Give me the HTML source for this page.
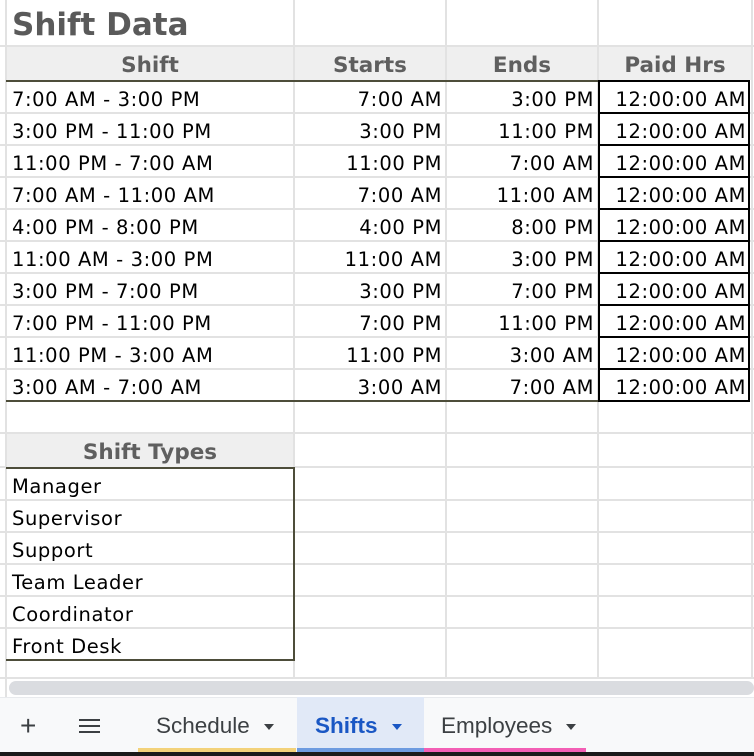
<!DOCTYPE html>
<html><head><meta charset="utf-8"><style>
*{margin:0;padding:0;box-sizing:border-box}
body{width:754px;height:756px;overflow:hidden;background:#fff;position:relative;font-family:"DejaVu Sans","Liberation Sans",sans-serif;color:#000}
.h{position:absolute;height:2px;background:#e2e2e2}
.v{position:absolute;width:2px;background:#e2e2e2}
.t{position:absolute;font-size:19.5px;letter-spacing:0.6px;line-height:32px;white-space:nowrap;margin-top:2px}
.r{text-align:right}
.hd{position:absolute;background:#efefef;color:#5f5f5f;font-weight:bold;font-size:21.5px;text-align:center;line-height:38px;height:33px;overflow:visible}
.pb{position:absolute;left:598px;width:152px;height:34px;border:2px solid #000}
.tab{position:absolute;top:697px;height:55px;font-family:"Liberation Sans",sans-serif;font-size:22.5px;color:#3c4043;line-height:58px}
.tab i{display:inline-block;width:0;height:0;border-left:5px solid transparent;border-right:5px solid transparent;border-top:6px solid currentColor;vertical-align:middle;margin-left:14px}
</style></head><body>
<div style="position:absolute;left:12px;top:3px;font-size:31px;font-weight:bold;color:#5a5a5a;line-height:44px">Shift Data</div>
<div class="v" style="left:5px;top:0;height:697px"></div>
<div class="v" style="left:293px;top:0;height:697px"></div>
<div class="v" style="left:445px;top:0;height:697px"></div>
<div class="v" style="left:597px;top:0;height:697px"></div>
<div class="v" style="left:751px;top:0;height:697px"></div>
<div class="h" style="left:0;width:754px;top:45px"></div>
<div class="h" style="left:0;width:754px;top:112px"></div>
<div class="h" style="left:0;width:754px;top:144px"></div>
<div class="h" style="left:0;width:754px;top:176px"></div>
<div class="h" style="left:0;width:754px;top:208px"></div>
<div class="h" style="left:0;width:754px;top:240px"></div>
<div class="h" style="left:0;width:754px;top:272px"></div>
<div class="h" style="left:0;width:754px;top:304px"></div>
<div class="h" style="left:0;width:754px;top:336px"></div>
<div class="h" style="left:0;width:754px;top:368px"></div>
<div class="h" style="left:0;width:754px;top:432px"></div>
<div class="h" style="left:0;width:754px;top:466px"></div>
<div class="h" style="left:0;width:754px;top:499px"></div>
<div class="h" style="left:0;width:754px;top:531px"></div>
<div class="h" style="left:0;width:754px;top:563px"></div>
<div class="h" style="left:0;width:754px;top:595px"></div>
<div class="h" style="left:0;width:754px;top:627px"></div>
<div class="h" style="left:0;width:754px;top:677px"></div>
<div class="hd" style="left:7px;top:47px;width:286px">Shift</div>
<div class="hd" style="left:295px;top:47px;width:150px">Starts</div>
<div class="hd" style="left:447px;top:47px;width:150px">Ends</div>
<div class="hd" style="left:599px;top:47px;width:152px">Paid Hrs</div>
<div style="position:absolute;left:6px;top:80px;width:592px;height:2px;background:#4d4d3a"></div>
<div style="position:absolute;left:6px;top:400px;width:592px;height:2px;background:#4d4d3a"></div>
<div class="pb" style="top:80px"></div><div class="pb" style="top:112px"></div><div class="pb" style="top:144px"></div><div class="pb" style="top:176px"></div><div class="pb" style="top:208px"></div><div class="pb" style="top:240px"></div><div class="pb" style="top:272px"></div><div class="pb" style="top:304px"></div><div class="pb" style="top:336px"></div><div class="pb" style="top:368px"></div>
<div class="t" style="left:12px;top:82px">7:00 AM - 3:00 PM</div><div class="t r" style="left:296px;width:146px;top:82px">7:00 AM</div><div class="t r" style="left:448px;width:146px;top:82px">3:00 PM</div><div class="t r" style="left:600px;width:146px;top:82px">12:00:00 AM</div>
<div class="t" style="left:12px;top:114px">3:00 PM - 11:00 PM</div><div class="t r" style="left:296px;width:146px;top:114px">3:00 PM</div><div class="t r" style="left:448px;width:146px;top:114px">11:00 PM</div><div class="t r" style="left:600px;width:146px;top:114px">12:00:00 AM</div>
<div class="t" style="left:12px;top:146px">11:00 PM - 7:00 AM</div><div class="t r" style="left:296px;width:146px;top:146px">11:00 PM</div><div class="t r" style="left:448px;width:146px;top:146px">7:00 AM</div><div class="t r" style="left:600px;width:146px;top:146px">12:00:00 AM</div>
<div class="t" style="left:12px;top:178px">7:00 AM - 11:00 AM</div><div class="t r" style="left:296px;width:146px;top:178px">7:00 AM</div><div class="t r" style="left:448px;width:146px;top:178px">11:00 AM</div><div class="t r" style="left:600px;width:146px;top:178px">12:00:00 AM</div>
<div class="t" style="left:12px;top:210px">4:00 PM - 8:00 PM</div><div class="t r" style="left:296px;width:146px;top:210px">4:00 PM</div><div class="t r" style="left:448px;width:146px;top:210px">8:00 PM</div><div class="t r" style="left:600px;width:146px;top:210px">12:00:00 AM</div>
<div class="t" style="left:12px;top:242px">11:00 AM - 3:00 PM</div><div class="t r" style="left:296px;width:146px;top:242px">11:00 AM</div><div class="t r" style="left:448px;width:146px;top:242px">3:00 PM</div><div class="t r" style="left:600px;width:146px;top:242px">12:00:00 AM</div>
<div class="t" style="left:12px;top:274px">3:00 PM - 7:00 PM</div><div class="t r" style="left:296px;width:146px;top:274px">3:00 PM</div><div class="t r" style="left:448px;width:146px;top:274px">7:00 PM</div><div class="t r" style="left:600px;width:146px;top:274px">12:00:00 AM</div>
<div class="t" style="left:12px;top:306px">7:00 PM - 11:00 PM</div><div class="t r" style="left:296px;width:146px;top:306px">7:00 PM</div><div class="t r" style="left:448px;width:146px;top:306px">11:00 PM</div><div class="t r" style="left:600px;width:146px;top:306px">12:00:00 AM</div>
<div class="t" style="left:12px;top:338px">11:00 PM - 3:00 AM</div><div class="t r" style="left:296px;width:146px;top:338px">11:00 PM</div><div class="t r" style="left:448px;width:146px;top:338px">3:00 AM</div><div class="t r" style="left:600px;width:146px;top:338px">12:00:00 AM</div>
<div class="t" style="left:12px;top:370px">3:00 AM - 7:00 AM</div><div class="t r" style="left:296px;width:146px;top:370px">3:00 AM</div><div class="t r" style="left:448px;width:146px;top:370px">7:00 AM</div><div class="t r" style="left:600px;width:146px;top:370px">12:00:00 AM</div>
<div class="hd" style="left:7px;top:434px;width:286px;height:33px;line-height:38px">Shift Types</div>
<div style="position:absolute;left:6px;top:467px;width:289px;height:194px;border:2px solid #4d4d3a;border-left:none"></div>
<div class="t" style="left:12px;top:469px">Manager</div>
<div class="t" style="left:12px;top:501px">Supervisor</div>
<div class="t" style="left:12px;top:533px">Support</div>
<div class="t" style="left:12px;top:565px">Team Leader</div>
<div class="t" style="left:12px;top:597px">Coordinator</div>
<div class="t" style="left:12px;top:629px">Front Desk</div>
<div style="position:absolute;left:7px;top:679px;width:747px;height:18px;background:#fff"></div>
<div style="position:absolute;left:9px;top:681px;width:745px;height:14px;background:#dadce0;border-radius:7px"></div>
<div style="position:absolute;left:0;top:697px;width:754px;height:55px;background:#f8f9fa;border-top:1px solid #e8eaed"></div>
<div style="position:absolute;left:20px;top:716px;font-size:28px;color:#3c4043;font-family:'Liberation Sans',sans-serif;line-height:20px">+</div>
<div style="position:absolute;left:79px;top:719px;width:21px;height:2px;background:#3c4043;box-shadow:0 6px 0 #3c4043,0 12px 0 #3c4043"></div>
<div class="tab" style="left:138px;width:158px;padding-left:18px">Schedule<i></i></div>
<div style="position:absolute;left:138px;top:748px;width:158px;height:4px;background:#f3d27a"></div>
<div class="tab" style="left:297px;width:127px;padding-left:18px;background:#e1e9f7;color:#1a57c4;font-weight:bold">Shifts<i></i></div>
<div style="position:absolute;left:297px;top:748px;width:127px;height:4px;background:#6d9be0"></div>
<div class="tab" style="left:424px;width:162px;padding-left:17px">Employees<i></i></div>
<div style="position:absolute;left:424px;top:748px;width:162px;height:4px;background:#f35fb5"></div>
<div style="position:absolute;left:0;top:752px;width:754px;height:4px;background:#1a1a1a"></div>
</body></html>
